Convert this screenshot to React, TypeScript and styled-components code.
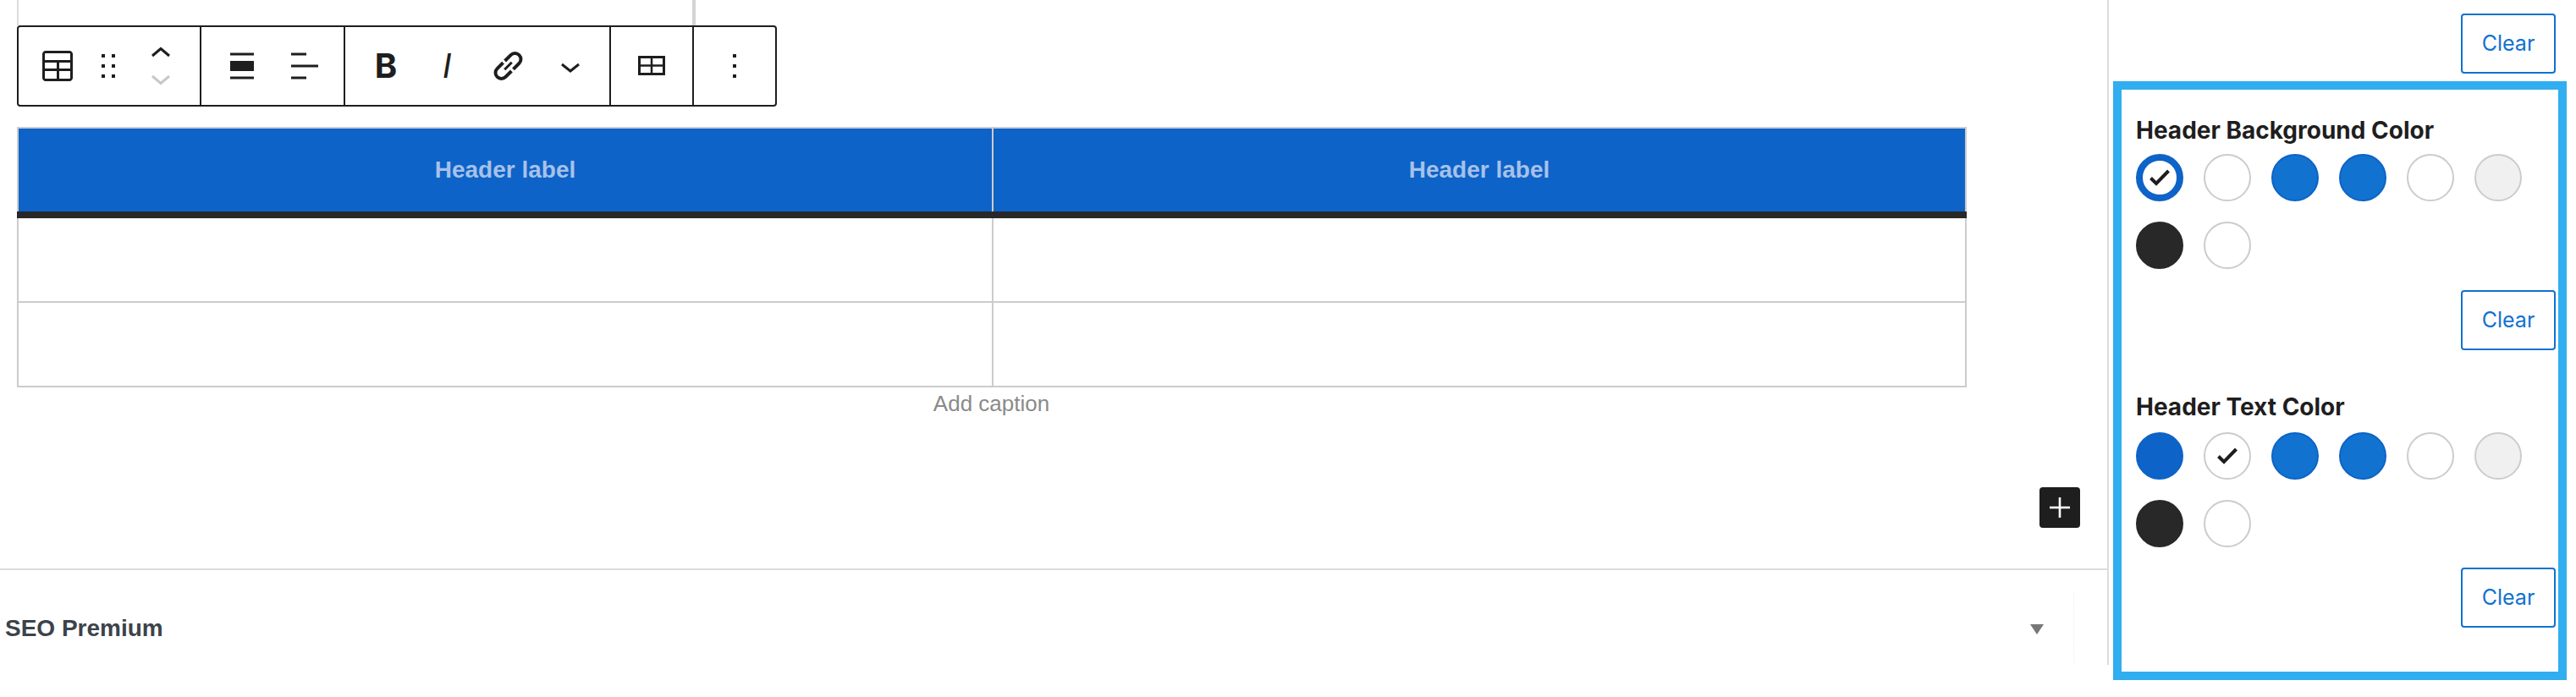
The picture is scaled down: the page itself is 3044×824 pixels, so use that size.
import React from "react";
import styled, { createGlobalStyle } from "styled-components";

const Global = createGlobalStyle`
  html, body { margin: 0; padding: 0; background: #fff; }
  * { box-sizing: border-box; }
`;

const Page = styled.div`
  display: flex;
  align-items: flex-start;
  width: 3044px;
  height: 824px;
  overflow: hidden;
  background: #fff;
  font-family: "Liberation Sans", Arial, sans-serif;
`;

const Main = styled.main`
  width: 2492px;
  height: 786px;
  flex: none;
  border-right: 2px solid #ddd;
`;

const BlockStub = styled.div`
  width: 802px;
  height: 30px;
  margin-left: 20px;
  border-left: 2px solid #ddd;
  border-right: 4px solid #d4d4d4;
`;

const Toolbar = styled.div`
  display: flex;
  width: 898px;
  height: 96px;
  margin-left: 20px;
  border: 2px solid #1e1e1e;
  border-radius: 4px;
  background: #fff;
`;

const ToolGroup = styled.div<{ $width: number; $pad: number; $gap: number; $last?: boolean }>`
  display: flex;
  align-items: center;
  flex: none;
  width: ${(p) => p.$width}px;
  padding-left: ${(p) => p.$pad}px;
  gap: ${(p) => p.$gap}px;
  border-right: ${(p) => (p.$last ? "none" : "2px solid #1e1e1e")};
`;

const ToolButton = styled.span<{ $width?: number }>`
  display: flex;
  align-items: center;
  justify-content: center;
  flex: none;
  width: ${(p) => p.$width ?? 48}px;
  height: 48px;
  color: #1e1e1e;
  svg { display: block; }
`;

const BoldGlyph = styled(ToolButton)`
  font: 700 40px/1 Inter, sans-serif;
`;

const ItalicGlyph = styled(ToolButton)`
  font: italic 400 40px/1 Inter, sans-serif;
`;

const DataTable = styled.table`
  display: block;
  width: 2304px;
  margin: 24px 0 0 20px;
  border-spacing: 0;
`;

const Head = styled.thead`
  display: block;
`;

const Body = styled.tbody`
  display: block;
`;

const HeadRow = styled.tr`
  display: grid;
  grid-template-columns: 1154px 1150px;
  height: 108px;
  border-bottom: 8px solid #282828;
`;

const BodyRow = styled.tr`
  display: grid;
  grid-template-columns: 1154px 1150px;
  height: 100px;
`;

const HeadCell = styled.th`
  display: flex;
  align-items: center;
  justify-content: center;
  background: #0d63c7;
  color: #a7c1ea;
  font-size: 28px;
  font-weight: 700;
  border-top: 2px solid #ccc;
  border-right: 2px solid #ccc;
  &:first-child { border-left: 2px solid #ccc; }
`;

const BodyCell = styled.td`
  border-right: 2px solid #ccc;
  border-bottom: 2px solid #ccc;
  &:first-child { border-left: 2px solid #ccc; }
`;

const Caption = styled.div`
  width: 2303px;
  margin: 4px 0 0 20px;
  font-size: 26px;
  line-height: 30px;
  text-align: center;
  color: #8a8a8a;
`;

const InserterRow = styled.div`
  display: flex;
  justify-content: flex-end;
  padding-right: 32px;
  margin-top: 84px;
`;

const Inserter = styled.span`
  display: flex;
  align-items: center;
  justify-content: center;
  width: 48px;
  height: 48px;
  border-radius: 4px;
  background: #1e1e1e;
`;

const SeoRow = styled.section`
  display: flex;
  align-items: flex-start;
  height: 112px;
  margin-top: 48px;
  padding-left: 6px;
  border-top: 2px solid #ddd;
`;

const SeoTitle = styled.h2`
  flex: 1;
  margin: 54px 0 0;
  font-size: 28px;
  line-height: 30px;
  font-weight: 700;
  color: #3c434a;
`;

const Caret = styled.span`
  flex: none;
  width: 0;
  height: 0;
  margin-top: 64px;
  border-left: 8px solid transparent;
  border-right: 8px solid transparent;
  border-top: 12px solid #777;
`;

const Handle = styled.span`
  flex: none;
  width: 40px;
  height: 86px;
  margin: 26px 0 0 35px;
  border-left: 1px dotted #f0f0f0;
`;

const Sidebar = styled.aside`
  flex: none;
  width: 552px;
  padding: 16px 0 0 5px;
  font-family: Inter, sans-serif;
`;

const ClearRow = styled.div<{ $top?: number; $right: number }>`
  display: flex;
  justify-content: flex-end;
  margin-top: ${(p) => p.$top ?? 0}px;
  padding-right: ${(p) => p.$right}px;
`;

const ClearButton = styled.button`
  width: 112px;
  height: 71px;
  padding: 0;
  border: 2px solid #1172cf;
  border-radius: 4px;
  background: #fff;
  color: #1172cf;
  font: 400 25px/1 Inter, sans-serif;
`;

const Panel = styled.div`
  width: 536px;
  height: 708px;
  margin-top: 9px;
  padding: 31px 0 0 17px;
  border: 10px solid #31aeef;
`;

const ColorSection = styled.div<{ $top?: number }>`
  margin-top: ${(p) => p.$top ?? 0}px;
`;

const SectionTitle = styled.h3`
  margin: 0;
  font-size: 28px;
  line-height: 34px;
  font-weight: 700;
  color: #1e1e1e;
`;

const Swatches = styled.div<{ $top: number }>`
  display: flex;
  flex-wrap: wrap;
  gap: 24px;
  width: 496px;
  margin-top: ${(p) => p.$top}px;
`;

const Swatch = styled.span<{ $fill: string; $ring: string; $thick?: boolean }>`
  display: flex;
  align-items: center;
  justify-content: center;
  width: 56px;
  height: 56px;
  border-radius: 50%;
  background: ${(p) => p.$fill};
  border: ${(p) => (p.$thick ? 8 : 2)}px solid ${(p) => p.$ring};
`;

const BLUE = { $fill: "#1172cf", $ring: "#0d63c7" };
const DEEP = { $fill: "#0d63c7", $ring: "#0d63c7" };
const WHITE = { $fill: "#fff", $ring: "#ccc" };
const GREY = { $fill: "#f0f0f0", $ring: "#ccc" };
const DARK = { $fill: "#282828", $ring: "#282828" };

const Check = () => (
  <svg width="26" height="20" viewBox="0 0 26 20" fill="none">
    <path d="M2.5 10.5 L9 17 L23.5 2" stroke="#1e1e1e" strokeWidth="4" />
  </svg>
);

const Svg48 = ({ children }: { children: React.ReactNode }) => (
  <svg width="48" height="48" viewBox="0 0 48 48" fill="#1e1e1e">
    {children}
  </svg>
);

const TableIcon = () => (
  <Svg48>
    <g transform="scale(2)">
      <path d="M19 3H5c-1.1 0-2 .9-2 2v14c0 1.1.9 2 2 2h14c1.100 0 2-.9 2-2V5c0-1.100-.9-2-2-2zM5 4.500h14c.3 0 .5.2.5.5v3.500h-15V5c0-.3.2-.5.5-.5zm8 5.500h6.500v3.500H13V10zm-1.500 3.500h-7V10h7v3.500zm-7 5.500v-4h7v4.500H5c-.3 0-.5-.2-.5-.5zm14.500.5h-6V15h6.500v4c0 .3-.2.5-.5.5z" />
    </g>
  </Svg48>
);

const Dots = ({ columns }: { columns: number[] }) => (
  <Svg48>
    {columns.map((x) =>
      [10, 22, 34].map((y) => <rect key={`${x}-${y}`} x={x} y={y} width="4" height="4" />)
    )}
  </Svg48>
);

const Mover = () => (
  <svg width="52" height="48" viewBox="0 0 52 48" fill="none">
    <path d="M16 12 L26 3.500 L36 12" stroke="#1e1e1e" strokeWidth="3" />
    <path d="M16 36 L26 44.500 L36 36" stroke="#c8c8c8" strokeWidth="3" />
  </svg>
);

const AlignWide = () => (
  <Svg48>
    <rect x="10" y="8.500" width="28" height="3" />
    <rect x="10" y="18" width="28" height="12" />
    <rect x="10" y="36.500" width="28" height="3" />
  </Svg48>
);

const AlignLeft = () => (
  <Svg48>
    <rect x="8" y="8.500" width="18" height="3" />
    <rect x="8" y="22.500" width="32" height="3" />
    <rect x="8" y="36.500" width="18" height="3" />
  </Svg48>
);

const LinkIcon = () => (
  <svg width="48" height="48" viewBox="0 0 48 48" fill="none">
    <g transform="translate(24.500 24) rotate(-45)" stroke="#1e1e1e" strokeWidth="4" strokeLinecap="butt">
      <path d="M-1.500 -7 H-11.300 A7 7 0 0 0 -11.300 7 H-1.500" />
      <path d="M1.500 -7 H11.300 A7 7 0 0 1 11.300 7 H1.500" />
      <path d="M-6 0 H6" strokeWidth="3" />
    </g>
  </svg>
);

const ChevronDown = () => (
  <svg width="52" height="48" viewBox="0 0 52 48" fill="none">
    <path d="M16 22 L26 30 L36 22" stroke="#1e1e1e" strokeWidth="3" />
  </svg>
);

const GridIcon = () => (
  <svg width="48" height="48" viewBox="0 0 48 48" fill="none" stroke="#1e1e1e">
    <rect x="9.500" y="13.500" width="29" height="20" strokeWidth="3" />
    <path d="M24 14 V33 M10 23.500 H38" strokeWidth="2.500" />
  </svg>
);

const PlusIcon = () => (
  <svg width="24" height="24" viewBox="0 0 24 24" fill="#fff">
    <rect x="10.700" y="0" width="2.600" height="24" />
    <rect x="0" y="10.700" width="24" height="2.600" />
  </svg>
);

const App = () => (
  <Page>
    <Global />
    <Main>
      <BlockStub />
      <Toolbar>
        <ToolGroup $width={216} $pad={22} $gap={12}>
          <ToolButton><TableIcon /></ToolButton>
          <ToolButton><Dots columns={[16, 28]} /></ToolButton>
          <ToolButton $width={52}><Mover /></ToolButton>
        </ToolGroup>
        <ToolGroup $width={170} $pad={24} $gap={26}>
          <ToolButton><AlignWide /></ToolButton>
          <ToolButton><AlignLeft /></ToolButton>
        </ToolGroup>
        <ToolGroup $width={314} $pad={24} $gap={24}>
          <BoldGlyph>B</BoldGlyph>
          <ItalicGlyph>I</ItalicGlyph>
          <ToolButton><LinkIcon /></ToolButton>
          <ToolButton $width={52}><ChevronDown /></ToolButton>
        </ToolGroup>
        <ToolGroup $width={98} $pad={24} $gap={0}>
          <ToolButton><GridIcon /></ToolButton>
        </ToolGroup>
        <ToolGroup $width={96} $pad={24} $gap={0} $last>
          <ToolButton><Dots columns={[22]} /></ToolButton>
        </ToolGroup>
      </Toolbar>
      <DataTable>
        <Head>
          <HeadRow>
            <HeadCell>Header label</HeadCell>
            <HeadCell>Header label</HeadCell>
          </HeadRow>
        </Head>
        <Body>
          <BodyRow><BodyCell /><BodyCell /></BodyRow>
          <BodyRow><BodyCell /><BodyCell /></BodyRow>
        </Body>
      </DataTable>
      <Caption>Add caption</Caption>
      <InserterRow>
        <Inserter><PlusIcon /></Inserter>
      </InserterRow>
      <SeoRow>
        <SeoTitle>SEO Premium</SeoTitle>
        <Caret />
        <Handle />
      </SeoRow>
    </Main>
    <Sidebar>
      <ClearRow $right={24}>
        <ClearButton>Clear</ClearButton>
      </ClearRow>
      <Panel>
        <ColorSection>
          <SectionTitle>Header Background Color</SectionTitle>
          <Swatches $top={11}>
            <Swatch {...WHITE} $ring="#0d63c7" $thick><Check /></Swatch>
            <Swatch {...WHITE} />
            <Swatch {...BLUE} />
            <Swatch {...BLUE} />
            <Swatch {...WHITE} />
            <Swatch {...GREY} />
            <Swatch {...DARK} />
            <Swatch {...WHITE} />
          </Swatches>
          <ClearRow $top={25} $right={3}>
            <ClearButton>Clear</ClearButton>
          </ClearRow>
        </ColorSection>
        <ColorSection $top={50}>
          <SectionTitle>Header Text Color</SectionTitle>
          <Swatches $top={13}>
            <Swatch {...DEEP} />
            <Swatch {...WHITE}><Check /></Swatch>
            <Swatch {...BLUE} />
            <Swatch {...BLUE} />
            <Swatch {...WHITE} />
            <Swatch {...GREY} />
            <Swatch {...DARK} />
            <Swatch {...WHITE} />
          </Swatches>
          <ClearRow $top={24} $right={3}>
            <ClearButton>Clear</ClearButton>
          </ClearRow>
        </ColorSection>
      </Panel>
    </Sidebar>
  </Page>
);

export default App;
